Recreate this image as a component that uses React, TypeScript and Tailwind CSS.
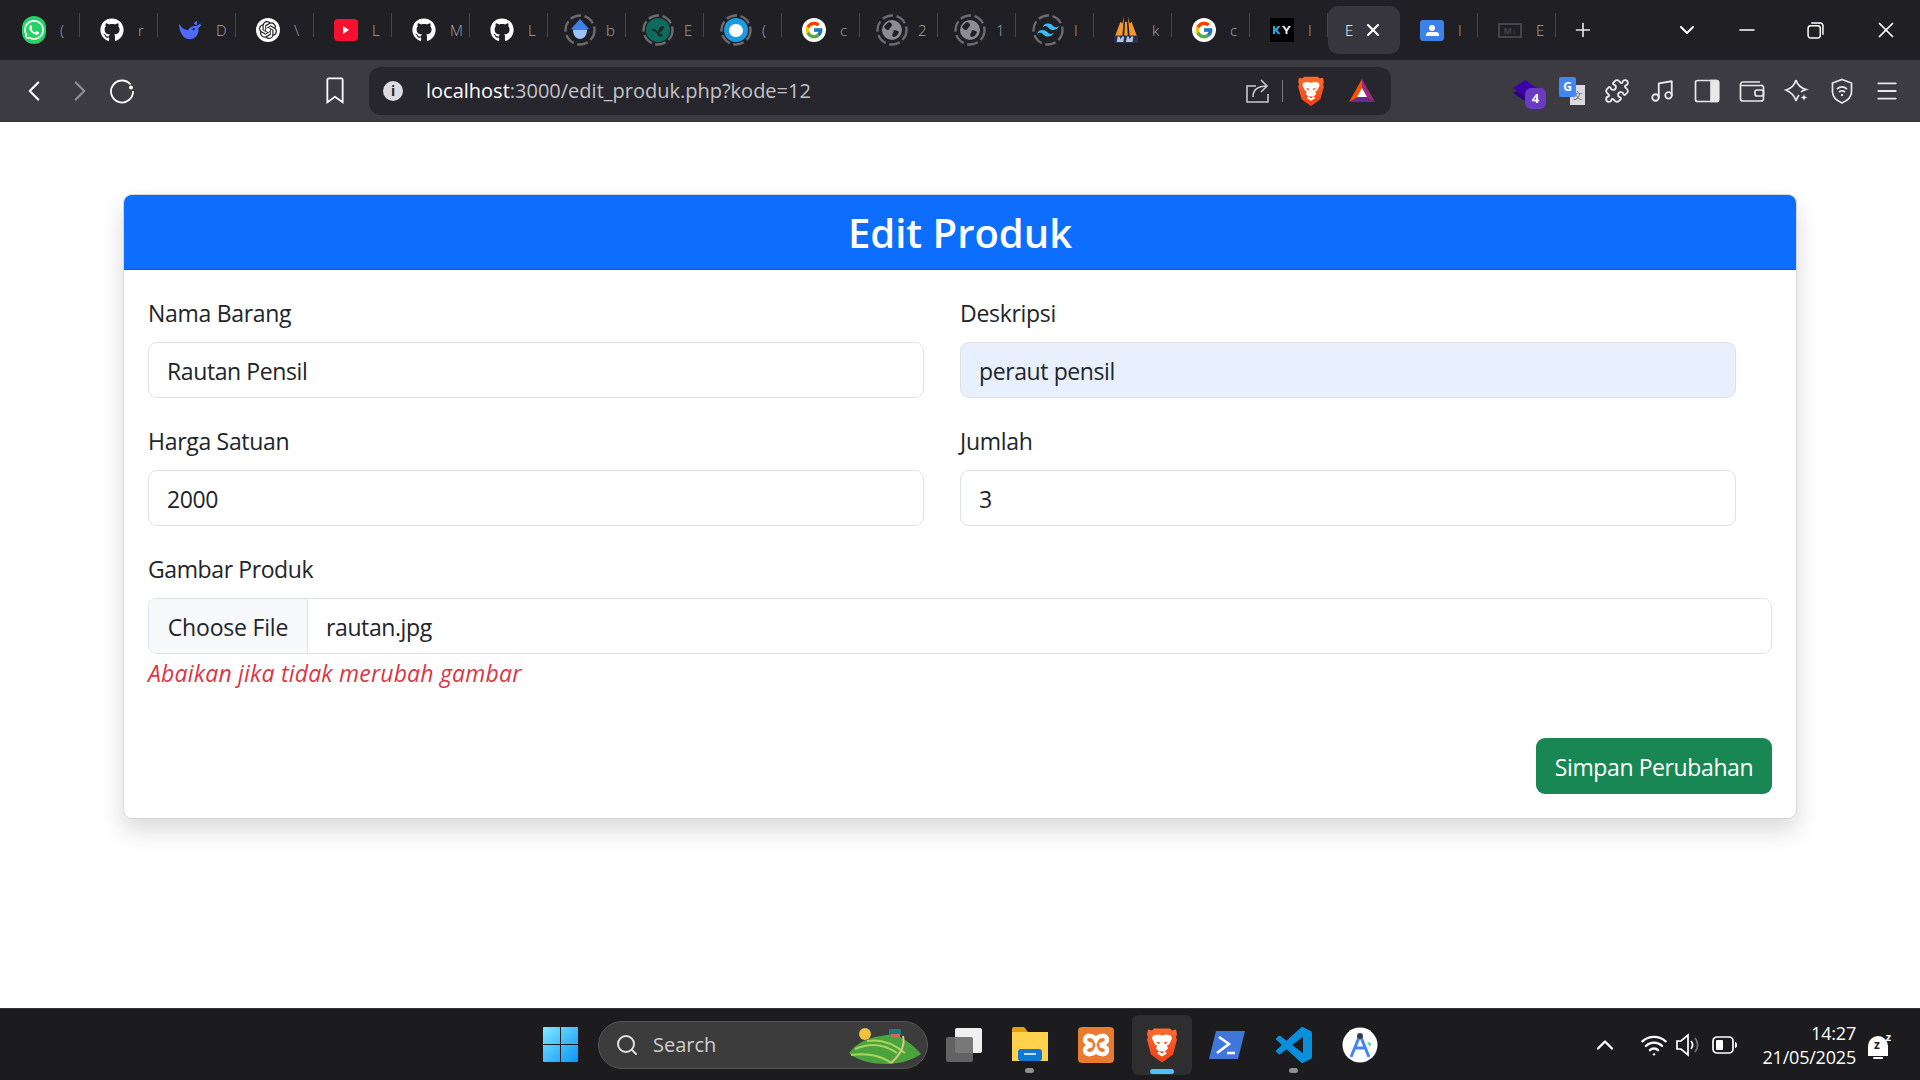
import type { ReactNode } from "react"
import { ChevronDown, ChevronLeft, ChevronRight, ChevronUp, Menu, Minus, Music, Plus, Puzzle, Search, Wifi, X } from "lucide-react"
import { FaGithub, FaWhatsapp } from "react-icons/fa"
import { FcGoogle } from "react-icons/fc"
import { SiOpenai, SiTailwindcss } from "react-icons/si"

const font = "font-['Open_Sans','Noto_Sans',sans-serif]"

const Ring = ({ children }: { children: ReactNode }) => (
	<div className="relative flex h-6 w-6 items-center justify-center">
		<svg viewBox="0 0 32 32" className="absolute -inset-[4px] h-8 w-8">
			<circle cx="16" cy="16" r="14.5" fill="none" stroke="#6b6b70" strokeWidth="2.4" strokeDasharray="11 3.5" />
		</svg>
		{children}
	</div>
)

const Github = () => (
	<div className="flex h-6 w-6 items-center justify-center rounded-full bg-[#1f1f24] text-white">
		<FaGithub className="h-6 w-6" />
	</div>
)

const Google = () => (
	<div className="flex h-6 w-6 items-center justify-center rounded-full bg-white">
		<FcGoogle className="h-5 w-5" />
	</div>
)

const Globe = () => (
	<Ring>
		<div className="flex h-5 w-5 items-center justify-center rounded-full bg-[#8b8d92]">
			<svg viewBox="0 0 20 20" className="h-5 w-5">
				<path d="M7 2c3 1 4 3 2 5-2 1-1 3-3 3S3 8 2 7c1-2 3-4 5-5zM12 10c2 0 4 1 5 2-1 3-3 5-6 5-1-2-1-3 0-4 1-1 0-2 1-3z" fill="#1f1f24" />
			</svg>
		</div>
	</Ring>
)

const Brave = ({ className }: { className: string }) => (
	<svg viewBox="0 0 30 35" className={className}>
		<defs>
			<linearGradient id="braveGrad" x1="0" y1="0" x2="0" y2="1">
				<stop offset="0" stopColor="#ff6b2c" />
				<stop offset="1" stopColor="#f13f15" />
			</linearGradient>
		</defs>
		<path d="M7 1h16l2 2 4-1 1 5-1 3 1 2-4 15-8 6-3 2-3-2-8-6L0 12l1-2-1-3 1-5 4 1z" fill="url(#braveGrad)" />
		<path d="M15 8l4-1 5 1 1 3-3 6-2 1 1 3-3 3 2 2-5 3-5-3 2-2-3-3 1-3-2-1-3-6 1-3 5-1z" fill="#fff" />
		<path d="M9 14l4 1-1 2zM21 14l-4 1 1 2zM12 24h6l-3 2z" fill="#f13f15" />
	</svg>
)

const tabs: { icon: ReactNode; ch: string }[] = [
	{ icon: <FaWhatsapp className="h-7 w-7 rounded-full bg-[#25d366] p-[2px] text-white" />, ch: "(" },
	{ icon: <Github />, ch: "r" },
	{
		icon: (
			<svg viewBox="0 0 26 22" className="h-6 w-6">
				<path d="M1 4c3 5 6 7 10 7 2-4 6-5 9-4l4-3 1 2-3 3c1 5-2 12-10 12C6 21 1 13 1 4z" fill="#4d6bfe" />
				<path d="M20 1c1 1 1 3 0 5l-3-2z" fill="#4d6bfe" />
				<circle cx="17" cy="10" r="1.3" fill="#1f1f24" />
			</svg>
		),
		ch: "D",
	},
	{
		icon: (
			<div className="flex h-6 w-6 items-center justify-center rounded-full bg-white">
				<SiOpenai className="h-[18px] w-[18px] text-[#222]" />
			</div>
		),
		ch: "\\",
	},
	{
		icon: (
			<div className="flex h-[22px] w-6 items-center justify-center rounded-[4px] bg-[#f5112f]">
				<div className="h-0 w-0 border-y-[4px] border-l-[6px] border-y-transparent border-l-white" />
			</div>
		),
		ch: "L",
	},
	{ icon: <Github />, ch: "M" },
	{ icon: <Github />, ch: "L" },
	{
		icon: (
			<Ring>
				<svg viewBox="0 0 24 24" className="h-6 w-6">
					<path d="M12 1l9 10-3 1H6l-3-1z" fill="#3f7fe8" />
					<path d="M5 12h14c0 5-3 9-7 9s-7-4-7-9z" fill="#9cc2f8" />
				</svg>
			</Ring>
		),
		ch: "b",
	},
	{
		icon: (
			<Ring>
				<div className="flex h-6 w-6 items-center justify-center rounded-full bg-[#0d6b5c]">
					<svg viewBox="0 0 20 20" className="h-5 w-5">
						<path d="M10 16c-1-4-4-5-6-5 0-3 3-3 6 1 0-4 3-6 6-6 0 4-3 6-5 7 2 0 4 1 4 3-2 1-4 1-5 0z" fill="#1f2d2a" />
					</svg>
				</div>
			</Ring>
		),
		ch: "E",
	},
	{
		icon: (
			<Ring>
				<div className="flex h-6 w-6 items-center justify-center rounded-full bg-[#1b9be0]">
					<div className="h-[13px] w-[14px] rounded-full bg-white" />
				</div>
			</Ring>
		),
		ch: "(",
	},
	{ icon: <Google />, ch: "c" },
	{ icon: <Globe />, ch: "2" },
	{ icon: <Globe />, ch: "1" },
	{
		icon: (
			<Ring>
				<SiTailwindcss className="h-[22px] w-[22px] text-[#38bdf8]" />
			</Ring>
		),
		ch: "I",
	},
	{
		icon: (
			<svg viewBox="0 0 26 30" className="h-[30px] w-[26px]">
				<path d="M11 0L9 8 7 6 1 22h8zM15 0l2 8 2-2 6 16h-8zM12 6h2l1 16h-4z" fill="#f39a2e" />
				<rect x="0" y="21" width="26" height="8" fill="#26314f" />
				<path d="M3 28l1-6h2l1 3 2-3h2l-1 6zM13 28l1-6h2l1 3 2-3h2l-1 6z" fill="#b8c4e0" />
			</svg>
		),
		ch: "k",
	},
	{ icon: <Google />, ch: "c" },
	{
		icon: (
			<div className="flex h-6 w-6 items-center justify-center bg-black">
				<svg viewBox="0 0 24 24" className="h-6 w-6">
					<path d="M3 8h2v3l3-3h2.500l-3 4 3 4H8l-3-3v3H3z" fill="#2ba4e0" />
					<path d="M12 8h2.500l2 3 2-3H21l-3.500 5v3h-2v-3z" fill="#e8e8e8" />
				</svg>
			</div>
		),
		ch: "I",
	},
]

function Tab({ icon, ch }: { icon: ReactNode; ch: string }) {
	return (
		<div className="relative flex h-12 w-[78px] shrink-0 items-center pl-5">
			<div className="flex h-6 w-6 items-center justify-center">{icon}</div>
			<span className="ml-[14px] text-[15px] font-light leading-none text-[#a6a6aa]">{ch}</span>
			<div className="absolute right-0 top-[7px] h-6 w-px bg-[#45454b]" />
		</div>
	)
}

function TabStrip() {
	return (
		<div className={`flex h-[60px] items-center bg-[#1f1f24] pl-[2px] ${font}`}>
			{tabs.map((t, i) => (
				<Tab key={i} icon={t.icon} ch={t.ch} />
			))}
			<div className="flex h-12 w-[72px] shrink-0 items-center rounded-[10px] bg-[#36363c] pl-[17px]">
				<span className="text-[15px] font-light leading-none text-white">E</span>
				<X className="ml-[10px] h-[20px] w-[20px] text-white" strokeWidth={2.5} />
			</div>
			<Tab
				icon={
					<div className="flex h-[21px] w-6 flex-col items-center justify-center rounded-[3px] bg-[#3b82e8]">
						<div className="h-[6px] w-[6px] rounded-full bg-white" />
						<div className="mt-[1px] h-[4px] w-[13px] rounded-t-[3px] bg-white" />
					</div>
				}
				ch="I"
			/>
			<Tab
				icon={
					<div className="flex h-[15px] w-6 items-center justify-center border-2 border-[#444449] text-[9px] font-bold leading-none text-[#444449]">
						M↓
					</div>
				}
				ch="E"
			/>
			<Plus className="ml-4 h-[22px] w-[22px] text-[#e6e6e8]" strokeWidth={1.8} />
			<ChevronDown className="ml-[81px] h-6 w-6 text-white" strokeWidth={2} />
			<Minus className="ml-[36px] h-6 w-6 text-white" strokeWidth={1.6} />
			<svg viewBox="0 0 16 16" className="ml-[48px] h-[17px] w-[17px]" fill="none" stroke="#fff" strokeWidth="1.4">
				<rect x="1" y="3.500" width="11.500" height="11.500" rx="2.500" />
				<path d="M4 1h8.500A2.500 2.500 0 0 1 15 3.500V12" />
			</svg>
			<X className="ml-[49px] h-[26px] w-[26px] text-white" strokeWidth={1.6} />
		</div>
	)
}

function ToolbarIcons() {
	const cls = "h-[26px] w-[26px] text-[#e8e8ea]"
	return (
		<div className="ml-auto flex items-center gap-[19px] pr-5">
			<div className="relative -ml-[2px] mr-[2px] h-[26px] w-[26px]">
				<svg viewBox="0 0 26 26" className="h-[26px] w-[26px]">
					<path d="M13 2l12 8-12 8-12-8z" fill="#3c00a8" />
					<path d="M1 15l12 8 4-2-12-8z" fill="#2c0085" />
				</svg>
				<div className="absolute left-[13px] top-[10px] flex h-[21px] w-[21px] items-center justify-center rounded-[6px] bg-[#6a3bc0] text-[13px] font-bold leading-none text-white">
					4
				</div>
			</div>
			<div className="relative h-7 w-[26px]">
				<div className="absolute bottom-0 right-0 flex h-[20px] w-[15px] items-center justify-center bg-[#d9dbde] text-[10px] leading-none text-[#666]">文</div>
				<div className="absolute left-0 top-0 flex h-[20px] w-[17px] items-center justify-center rounded-[2px] bg-[#4285f4] text-[12px] font-bold leading-none text-white">G</div>
			</div>
			<Puzzle className={cls} strokeWidth={1.7} />
			<Music className={cls} strokeWidth={1.7} />
			<svg viewBox="0 0 26 26" className={cls} fill="none" stroke="currentColor" strokeWidth="1.7">
				<rect x="1.500" y="2.500" width="23" height="21" rx="2" />
				<path d="M17 2.500h5.500a2 2 0 0 1 2 2v17a2 2 0 0 1-2 2H17z" fill="currentColor" />
			</svg>
			<svg viewBox="0 0 26 26" className={cls} fill="none" stroke="currentColor" strokeWidth="1.7">
				<path d="M21 4H4a2.500 2.500 0 0 0-2.500 2.500v14A2.500 2.500 0 0 0 4 23h18a2.500 2.500 0 0 0 2.500-2.500v-11A2 2 0 0 0 22 7.500H2" />
				<rect x="16" y="12" width="8.500" height="6" rx="2" />
			</svg>
			<svg viewBox="0 0 26 26" className={cls} fill="none" stroke="currentColor" strokeWidth="1.7">
				<path d="M12 2c1.500 5 4.500 8 10 9.500-3 1-4 1.500-5 2.500M12 23c-1.200-5-4.500-8.500-10-11 5.500-1.500 8.500-5 10-10M12 23c.8-2.500 1.500-4 3-6" />
				<path d="M20 16c.4 2.200 1.300 3.100 3.500 3.500-2.200.4-3.100 1.300-3.500 3.500-.4-2.200-1.300-3.100-3.500-3.500 2.200-.4 3.100-1.300 3.500-3.500z" fill="currentColor" stroke="none" />
			</svg>
			<svg viewBox="0 0 26 26" className={cls} fill="none" stroke="currentColor" strokeWidth="1.7">
				<path d="M13 1.500l9.500 3.500v9c0 5-4 8.500-9.500 11-5.500-2.500-9.500-6-9.500-11V5z" />
				<path d="M8 11c3-2.500 7-2.500 10 0M10 14c2-1.500 4-1.500 6 0" />
				<circle cx="13" cy="17" r="1.200" fill="currentColor" stroke="none" />
			</svg>
			<Menu className={cls} strokeWidth={1.7} />
		</div>
	)
}

function Toolbar() {
	return (
		<div className="flex h-[62px] items-center border-b border-[#323237] bg-[#3b3b41] pl-[22px]">
			<ChevronLeft className="-mx-[5px] h-[34px] w-[34px] text-white" strokeWidth={1.5} />
			<ChevronRight className="ml-[17px] -mr-[5px] h-[34px] w-[34px] text-[#8f8f93]" strokeWidth={1.5} />
			<svg viewBox="0 0 26 26" className="ml-[17px] h-[26px] w-[26px]" fill="none" stroke="#fff" strokeWidth="1.8">
				<path d="M21.500 6.500A11 11 0 1 0 24 13" />
				<circle cx="22" cy="9.500" r="2" fill="#fff" stroke="none" />
			</svg>
			<svg viewBox="0 0 20 30" className="ml-[191px] h-[27px] w-[18px]" fill="none" stroke="#fff" strokeWidth="2">
				<path d="M3 1.500h14a1.500 1.500 0 0 1 1.500 1.500v25L10 22l-8.500 6V3A1.500 1.500 0 0 1 3 1.500z" />
			</svg>
			<div className="ml-[25px] flex h-12 w-[1022px] items-center rounded-[12px] bg-[#26262c] pl-[14px] pr-[15px]">
				<div className="flex h-5 w-5 items-center justify-center rounded-full bg-[#dcdce0] text-[14px] font-bold leading-none text-[#26262c]">i</div>
				<div className={`ml-[23px] text-[20px] leading-none ${font}`}>
					<span className="text-white">localhost</span>
					<span className="text-[#c3c3c7]">:3000/edit_produk.php?kode=12</span>
				</div>
				<svg viewBox="0 0 26 26" className="ml-auto h-[26px] w-[26px]" fill="none" stroke="#c9c9cc" strokeWidth="1.6">
					<path d="M12 8H3v16h21v-8M9 19c0-7 5-11 14-11M17 2l6 6-6 6" />
				</svg>
				<div className="ml-[12px] h-[22px] w-px bg-[#77777c]" />
				<Brave className="ml-[15px] h-[30px] w-[26px]" />
				<svg viewBox="0 0 28 26" className="ml-[24px] h-[26px] w-7">
					<path d="M14 1L27 24 14 17z" fill="#a1267c" />
					<path d="M14 1L1 24l13-7z" fill="#ff5000" />
					<path d="M1 24h26l-13-7z" fill="#662d91" />
					<path d="M14 10l5 9H9z" fill="#fff" />
				</svg>
			</div>
			<ToolbarIcons />
		</div>
	)
}

function Field({ label, value, autofill }: { label: string; value: string; autofill?: boolean }) {
	return (
		<div className="pr-9">
			<div className="mb-[11px] text-[23px] leading-[36px] tracking-[-0.3px] text-[#212529]">{label}</div>
			<div className={`flex h-[56px] items-center rounded-[9px] border-[1.5px] border-[#dee2e6] px-[18px] pt-[2px] text-[23px] tracking-[-0.4px] text-[#212529] ${autofill ? "bg-[#e8f0fe]" : "bg-white"}`}>
				{value}
			</div>
		</div>
	)
}

function EditCard() {
	return (
		<div className={`overflow-hidden rounded-[9px] border-[1.5px] border-[#d6d6d6] bg-white shadow-[0_12px_24px_rgba(0,0,0,0.15)] ${font}`}>
			<div className="flex h-[75px] items-center justify-center border-b border-[#0b5ed7] bg-[#0d6efd] pt-[2px] text-[40px] font-semibold leading-none text-white">
				Edit Produk
			</div>
			<div className="px-6 pb-6 pt-[25px]">
				<div className="grid grid-cols-2 gap-y-[25px]">
					<Field label="Nama Barang" value="Rautan Pensil" />
					<Field label="Deskripsi" value="peraut pensil" autofill />
					<Field label="Harga Satuan" value="2000" />
					<Field label="Jumlah" value="3" />
				</div>
				<div className="mt-[25px] text-[23px] leading-[36px] tracking-[-0.4px] text-[#212529]">Gambar Produk</div>
				<div className="mt-[11px] flex h-[56px] items-center overflow-hidden rounded-[9px] border-[1.5px] border-[#dee2e6] text-[23px] text-[#212529]">
					<div className="flex h-full w-[159px] items-center justify-center border-r-[1.5px] border-[#dee2e6] bg-[#f8f9fa] pt-[2px] tracking-[-0.2px]">Choose File</div>
					<div className="pl-[18px] pt-[2px] tracking-[-0.4px]">rautan.jpg</div>
				</div>
				<div className="mt-[2px] text-[23px] italic leading-[34px] tracking-[0.2px] text-[#dc3545]">Abaikan jika tidak merubah gambar</div>
				<div className="mt-[48px] flex justify-end">
					<button className="h-[56px] w-[236px] rounded-[9px] bg-[#198754] pt-[2px] text-[23px] tracking-[-0.4px] text-white">Simpan Perubahan</button>
				</div>
			</div>
		</div>
	)
}

function TaskIcon({ children, dot, active, className }: { children: ReactNode; dot?: boolean; active?: boolean; className?: string }) {
	return (
		<div className={`relative flex h-[60px] w-[60px] items-center justify-center rounded-[6px] ${active ? "bg-[#2e2e2e]" : ""} ${className ?? ""}`}>
			{children}
			{dot && <div className="absolute bottom-[2px] left-[25px] h-[5px] w-[9px] rounded-full bg-[#8f8f8f]" />}
			{active && <div className="absolute bottom-[1px] left-[18px] h-[5px] w-6 rounded-full bg-[#4cc2ff]" />}
		</div>
	)
}

function Taskbar() {
	return (
		<div className={`flex h-[72px] items-center border-t border-[#333] bg-[#1c1c1e] pl-[543px] ${font}`}>
			<svg viewBox="0 0 35 35" className="h-[35px] w-[35px]">
				<defs>
					<linearGradient id="winGrad" x1="0" y1="0" x2="1" y2="1">
						<stop offset="0" stopColor="#7fe9ff" />
						<stop offset="1" stopColor="#0a94f8" />
					</linearGradient>
				</defs>
				<path d="M1 0h16v17H0V1a1 1 0 0 1 1-1zM18 0h16a1 1 0 0 1 1 1v16H18zM0 18h17v17H1a1 1 0 0 1-1-1zM18 18h17v16a1 1 0 0 1-1 1H18z" fill="url(#winGrad)" />
			</svg>
			<div className="ml-[20px] flex h-12 w-[330px] items-center rounded-full border-[1.5px] border-[#555] bg-[#3c3c3c] pl-[16px]">
				<Search className="h-6 w-6 text-[#e2e2e2]" strokeWidth={2} />
				<span className="ml-[14px] text-[20px] leading-none text-[#cfcfcf]">Search</span>
				<svg viewBox="0 0 72 38" className="ml-auto mr-[6px] h-[38px] w-[72px]">
					<circle cx="16" cy="8" r="6" fill="#f0c040" />
					<path d="M0 27C6 19 14 14 26 11l18-3c12 4 22 13 28 20-8 6-22 10-34 10-14 0-30-3-38-11z" fill="#4aa33c" />
					<path d="M6 23c14-6 28-6 42 4M18 15c12-2 26 2 38 12M2 29c14-2 30 0 40 8" fill="none" stroke="#a7d65a" strokeWidth="2" />
					<path d="M54 10c2 8-2 18-12 27" fill="none" stroke="#e0c489" strokeWidth="2" />
					<rect x="40" y="3" width="12" height="6" fill="#1f7a7a" />
					<rect x="42" y="8" width="9" height="3" fill="#d9694a" />
				</svg>
			</div>
			<svg viewBox="0 0 36 34" className="ml-[18px] h-[34px] w-9">
				<rect x="9" y="0" width="27" height="25" rx="2" fill="#f0f0f0" />
				<rect x="0" y="9" width="27" height="25" rx="2" fill="#6a6a6a" fillOpacity="0.9" />
			</svg>
			<TaskIcon dot className="ml-[18px]">
				<svg viewBox="0 0 36 34" className="mt-[-2px] h-[34px] w-9">
					<path d="M0 2a2 2 0 0 1 2-2h10l4 5h18a2 2 0 0 1 2 2v4H0z" fill="#e0a010" />
					<path d="M0 5h36v29H0z" fill="#ffd24d" />
					<rect x="6" y="22" width="24" height="12" rx="3" fill="#0f78d4" />
					<rect x="12" y="26" width="12" height="2" fill="#bde0ff" />
				</svg>
			</TaskIcon>
			<TaskIcon className="ml-[6px]">
				<div className="flex h-9 w-9 items-center justify-center rounded-[4px] bg-[#ea7a2d]">
					<svg viewBox="0 0 28 26" className="h-[26px] w-7" fill="none" stroke="#fff" strokeWidth="4.500">
						<path d="M14 8c-2-5-11-6-11 0 0 3 3 4 7 5-4 1-7 2-7 5 0 6 9 5 11 0 2 5 11 6 11 0 0-3-3-4-7-5 4-1 7-2 7-5 0-6-9-5-11 0z" />
					</svg>
				</div>
			</TaskIcon>
			<TaskIcon active className="ml-[6px]">
				<Brave className="h-9 w-[30px]" />
			</TaskIcon>
			<TaskIcon className="ml-[5px]">
				<svg viewBox="0 0 36 28" className="h-7 w-9">
					<path d="M7 0h29l-7 28H0z" fill="#3f78d8" />
					<path d="M10 6l10 7-12 9" fill="none" stroke="#fff" strokeWidth="2.500" />
					<path d="M18 22h8" stroke="#fff" strokeWidth="2.500" />
				</svg>
			</TaskIcon>
			<TaskIcon dot className="ml-[7px]">
				<svg viewBox="0 0 24 24" className="h-9 w-9">
					<path d="M23.15 2.587L18.21.21a1.494 1.494 0 0 0-1.705.29l-9.46 8.63-4.12-3.128a.999.999 0 0 0-1.276.057L.327 7.261A1 1 0 0 0 .326 8.74L3.899 12 .326 15.26a1 1 0 0 0 .001 1.479L1.65 17.94a.999.999 0 0 0 1.276.057l4.12-3.128 9.46 8.63a1.492 1.492 0 0 0 1.704.29l4.942-2.377A1.5 1.5 0 0 0 24 20.06V3.939a1.5 1.5 0 0 0-.85-1.352zm-5.146 14.861L10.826 12l7.178-5.448v10.896z" fill="#0a8fdc" />
				</svg>
			</TaskIcon>
			<TaskIcon className="ml-[6px]">
				<svg viewBox="0 0 36 36" className="h-9 w-9">
					<circle cx="18" cy="18" r="17.500" fill="#fff" />
					<path d="M18 8l-9 22M18 8l9 22M12 21h12" fill="none" stroke="#4285f4" strokeWidth="3" />
					<circle cx="18" cy="9" r="3" fill="#3a3a4a" />
					<path d="M25 15l4 1-1 4z" fill="#3ddc84" />
				</svg>
			</TaskIcon>
			<ChevronUp className="ml-[201px] h-7 w-7 text-white" strokeWidth={2} />
			<Wifi className="ml-[21px] h-[28px] w-[28px] text-white" strokeWidth={2} />
			<svg viewBox="0 0 26 26" className="ml-[7px] h-[26px] w-[26px]" fill="none" strokeWidth="1.7">
				<path d="M2 9h4l7-6v20l-7-6H2z" stroke="#fff" />
				<path d="M16 9c2 2.500 2 5.500 0 8" stroke="#fff" />
				<path d="M20 6c3.500 4 3.500 10 0 14" stroke="#777" />
			</svg>
			<svg viewBox="0 0 26 18" className="ml-[11px] h-[18px] w-[26px]" fill="none">
				<rect x="1" y="1" width="20" height="16" rx="4" stroke="#fff" strokeWidth="1.7" />
				<rect x="4" y="4" width="7" height="10" rx="1" fill="#fff" />
				<path d="M23 6c1.500 0 2 1.500 2 3s-.5 3-2 3z" fill="#fff" />
			</svg>
			<div className="ml-[6px] w-[112px] text-right text-[18px] leading-[24px] tracking-[-0.2px] text-white">
				<div>14:27</div>
				<div>21/05/2025</div>
			</div>
			<div className="relative ml-[12px] h-7 w-[22px]">
				<div className="absolute bottom-[3px] left-0 h-[20px] w-[20px] rounded-t-full bg-white" />
				<div className="absolute bottom-0 left-[5px] h-[2px] w-[10px] rounded-full bg-white" />
				<span className="absolute left-[6px] top-[8px] text-[12px] font-bold leading-none text-[#1c1c1e]">z</span>
				<span className="absolute -right-[1px] top-0 text-[11px] font-bold leading-none text-white">z</span>
			</div>
		</div>
	)
}

export default function App() {
	return (
		<div className="flex h-screen flex-col overflow-hidden bg-white">
			<TabStrip />
			<Toolbar />
			<main className="flex-1 px-[123px] pt-[72px]">
				<EditCard />
			</main>
			<Taskbar />
		</div>
	)
}
